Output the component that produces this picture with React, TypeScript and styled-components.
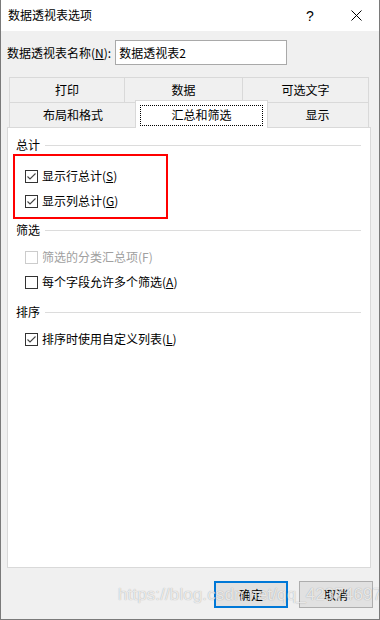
import styled, { createGlobalStyle } from 'styled-components';

const GlobalStyle = createGlobalStyle`
    html, body {
        margin: 0;
        padding: 0;
        background: #f0f0f0;
    }
    body {
        font-family: "Noto Sans CJK SC", "Noto Sans", sans-serif;
        font-size: 12px;
        color: #000;
    }
`

const Window = styled.div`
    position: relative;
    width: 380px;
    height: 620px;
    box-sizing: border-box;
    display: flex;
    flex-direction: column;
    background: #f0f0f0;
    border: 1px solid #7a7a7a;
    border-top: none;
    overflow: hidden;
`

const TitleBar = styled.div`
    height: 31px;
    flex-shrink: 0;
    background: #fff;
    display: flex;
    align-items: center;
    padding-left: 7px;
    line-height: 16px;
`

const TitleText = styled.div`
    flex: 1;
    margin-top: -1px;
`

const TitleButton = styled.div`
    width: 46px;
    height: 31px;
    display: flex;
    align-items: center;
    justify-content: center;
    font-family: "Liberation Sans", sans-serif;
    font-size: 14px;
`

const NameRow = styled.div`
    display: flex;
    align-items: center;
    padding: 9px 0 0 6px;
    gap: 4px;
    line-height: 16px;
`

const NameInput = styled.div`
    width: 172px;
    height: 25px;
    box-sizing: border-box;
    background: #fff;
    border: 1px solid #a9a9a9;
    display: flex;
    align-items: center;
    padding-left: 3px;
`

const TabStrip = styled.div`
    margin: 12px 2px 0 8px;
    display: flex;
    flex-direction: column;
`

const TabRow = styled.div`
    display: flex;
    height: 25px;
`

const Tab = styled.div<{ $w: number }>`
    width: ${props => props.$w}px;
    box-sizing: border-box;
    border: 1px solid #d9d9d9;
    border-bottom: none;
    display: flex;
    align-items: center;
    justify-content: center;
    line-height: 16px;

    & + & {
        margin-left: -1px;
    }
`

const ActiveTab = styled.div<{ $w: number }>`
    width: ${props => props.$w}px;
    box-sizing: border-box;
    margin: -2px -2px -1px -2px;
    background: #fff;
    border: 1px solid #d9d9d9;
    border-bottom: none;
    z-index: 1;
    padding: 4px 4px 2px 4px;
    display: flex;
`

const FocusRect = styled.div`
    flex: 1;
    border: 1px dotted #000;
    display: flex;
    align-items: center;
    justify-content: center;
    line-height: 16px;
    padding-bottom: 1px;
`

const Panel = styled.div`
    margin: 0 0 0 6px;
    width: 364px;
    height: 441px;
    box-sizing: border-box;
    background: #fff;
    border: 1px solid #d9d9d9;
    padding-top: 9px;
    display: flex;
    flex-direction: column;
`

const GroupHeader = styled.div<{ $mt?: number }>`
    display: flex;
    align-items: center;
    height: 16px;
    line-height: 16px;
    margin: ${props => props.$mt || 0}px 9px 0 8px;

    span {
        margin-right: 5px;
    }

    &::after {
        content: '';
        flex: 1;
        height: 1px;
        margin-top: 1px;
        background: #dcdcdc;
    }
`

const Highlight = styled.div`
    margin: 1px 0 0 5px;
    width: 155px;
    box-sizing: border-box;
    border: 2px solid #ff0000;
    padding: 7px 0 4px 10px;
`

const OptionRow = styled.div<{ $mt?: number; $inset?: boolean }>`
    display: flex;
    align-items: center;
    height: 25px;
    margin-top: ${props => props.$mt || 0}px;
    padding-left: ${props => props.$inset ? 0 : 17}px;
    line-height: 16px;
`

const Box = styled.div<{ $disabled?: boolean }>`
    width: 13px;
    height: 13px;
    box-sizing: border-box;
    border: 1px solid ${props => props.$disabled ? '#cccccc' : '#333333'};
    background: #fff;
    margin: 1px 4px 0 0;
    display: flex;
    align-items: center;
    justify-content: center;
`

const OptionText = styled.span<{ $disabled?: boolean }>`
    color: ${props => props.$disabled ? '#a0a0a0' : '#000'};

    u {
        text-decoration: underline;
        text-underline-offset: 1px;
    }
`

const Footer = styled.div`
    display: flex;
    justify-content: flex-end;
    gap: 11px;
    padding: 13px 6px 0 0;
`

const Button = styled.div<{ $primary?: boolean }>`
    width: 74px;
    height: 27px;
    box-sizing: border-box;
    background: #e1e1e1;
    border: ${props => props.$primary ? '2px solid #0078d7' : '1px solid #adadad'};
    display: flex;
    align-items: center;
    justify-content: center;
    line-height: 16px;
`

const Watermark = styled.div`
    position: absolute;
    left: 117px;
    top: 585px;
    font-family: "Liberation Sans", sans-serif;
    font-size: 17px;
    letter-spacing: 0.1px;
    color: rgba(255, 255, 255, 0.75);
    text-shadow: 0 0 1px rgba(0, 0, 0, 0.35);
    white-space: nowrap;
    pointer-events: none;
`

const Check = ({ checked, disabled }: { checked?: boolean; disabled?: boolean }) => (
    <Box $disabled={disabled}>
        {checked && (
            <svg width="11" height="11" viewBox="0 0 11 11">
                <polyline points="1.5,5.5 4,8 9.5,2.5" fill="none" stroke="#444" strokeWidth="1.1" />
            </svg>
        )}
    </Box>
)

const Option = ({ label, keyChar, checked, disabled, mt, inset }: {
    label: string; keyChar: string; checked?: boolean; disabled?: boolean; mt?: number; inset?: boolean
}) => (
    <OptionRow $mt={mt} $inset={inset}>
        <Check checked={checked} disabled={disabled} />
        <OptionText $disabled={disabled}>
            {label}({disabled ? keyChar : <u>{keyChar}</u>})
        </OptionText>
    </OptionRow>
)

const App = () => {
    return (
        <>
            <GlobalStyle />
            <Window>
                <TitleBar>
                    <TitleText>数据透视表选项</TitleText>
                    <TitleButton>?</TitleButton>
                    <TitleButton>
                        <svg width="11" height="11" viewBox="0 0 11 11">
                            <path d="M0.5 0.5 L10.5 10.5 M10.5 0.5 L0.5 10.5" stroke="#000" strokeWidth="1" />
                        </svg>
                    </TitleButton>
                </TitleBar>

                <NameRow>
                    <span>数据透视表名称(<u>N</u>):</span>
                    <NameInput>数据透视表2</NameInput>
                </NameRow>

                <TabStrip>
                    <TabRow>
                        <Tab $w={116}>打印</Tab>
                        <Tab $w={119}>数据</Tab>
                        <Tab $w={127}>可选文字</Tab>
                    </TabRow>
                    <TabRow>
                        <Tab $w={128}>布局和格式</Tab>
                        <ActiveTab $w={133}>
                            <FocusRect>汇总和筛选</FocusRect>
                        </ActiveTab>
                        <Tab $w={103}>显示</Tab>
                    </TabRow>
                </TabStrip>

                <Panel>
                    <GroupHeader><span>总计</span></GroupHeader>
                    <Highlight>
                        <Option label="显示行总计" keyChar="S" checked inset />
                        <Option label="显示列总计" keyChar="G" checked inset />
                    </Highlight>

                    <GroupHeader $mt={3}><span>筛选</span></GroupHeader>
                    <Option label="筛选的分类汇总项" keyChar="F" disabled mt={6} />
                    <Option label="每个字段允许多个筛选" keyChar="A" />

                    <GroupHeader $mt={10}><span>排序</span></GroupHeader>
                    <Option label="排序时使用自定义列表" keyChar="L" checked mt={6} />
                </Panel>

                <Footer>
                    <Button $primary>确定</Button>
                    <Button>取消</Button>
                </Footer>

                <Watermark>https://blog.csdn.net/qq_42374697</Watermark>
            </Window>
        </>
    )
};

export default App;
